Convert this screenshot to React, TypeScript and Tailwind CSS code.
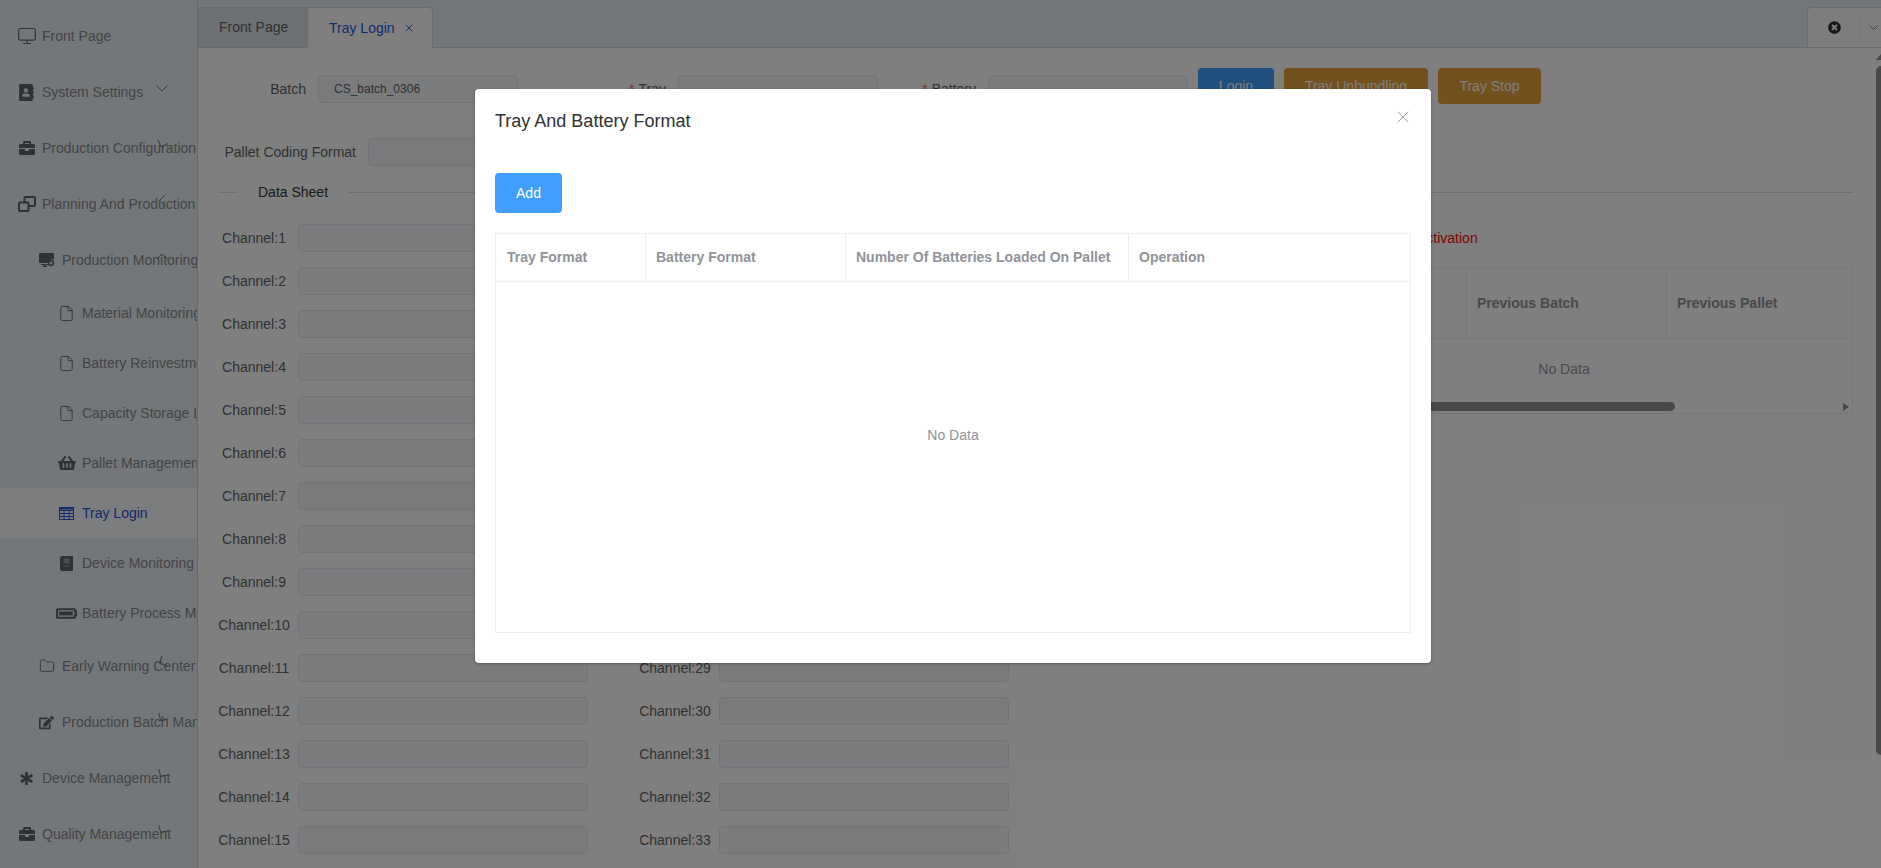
import type { ReactNode } from "react";
import { File, Folder, Monitor, X } from "lucide-react";
import {
  FaAddressBook,
  FaAsterisk,
  FaBatteryFull,
  FaBriefcase,
  FaEdit,
  FaShoppingBasket,
  FaTimesCircle,
} from "react-icons/fa";

function RestoreIcon() {
  return (
    <svg width="18" height="16" viewBox="0 0 18 16" fill="none" stroke="currentColor" strokeWidth="2">
      <rect x="6.500" y="1" width="10.500" height="9" rx="1" />
      <rect x="1" y="6.500" width="9.500" height="8.500" rx="1" fill="#e8eef2" />
    </svg>
  );
}

function ScreenGearIcon() {
  return (
    <svg width="15" height="14" viewBox="0 0 15 14" fill="currentColor">
      <path d="M1 0h13a1 1 0 0 1 1 1v5.500a4 4 0 0 0-5.500 3.500H1a1 1 0 0 1-1-1V1a1 1 0 0 1 1-1z" />
      <rect x="2" y="11" width="8" height="1" />
      <rect x="4" y="12.500" width="4" height="1.500" />
      <circle cx="12" cy="10" r="2.400" fill="none" stroke="currentColor" strokeWidth="1.600" />
    </svg>
  );
}

function BookIcon() {
  return (
    <svg width="13" height="15" viewBox="0 0 13 15" fill="currentColor">
      <path d="M2 0h11v15H2a2 2 0 0 1-2-2V2a2 2 0 0 1 2-2z" />
      <rect x="3.500" y="2.500" width="6" height="5" fill="#9a9ea3" />
      <rect x="3.500" y="9.500" width="6.500" height="1" fill="#9a9ea3" />
    </svg>
  );
}

function GridIcon() {
  return (
    <svg width="15" height="13" viewBox="0 0 15 13" fill="none" stroke="currentColor" strokeWidth="1">
      <rect x="0.500" y="0.500" width="14" height="12" />
      <path d="M0 3.500h15M0 6.500h15M0 9.500h15M5 3v10M10 3v10" />
      <path d="M0 1.500h15" strokeWidth="2" />
    </svg>
  );
}

type NavRow = {
  label: string;
  level: 0 | 1 | 2;
  icon: ReactNode;
  chevron?: string;
  active?: boolean;
};

const NAV: NavRow[] = [
  { label: "Front Page", level: 0, icon: <Monitor size={20} strokeWidth={1.4} /> },
  { label: "System Settings", level: 0, icon: <FaAddressBook size={17} />, chevron: "rotate-0" },
  { label: "Production Configuration", level: 0, icon: <FaBriefcase size={16} />, chevron: "rotate-[20deg]" },
  { label: "Planning And Production", level: 0, icon: <RestoreIcon />, chevron: "rotate-[90deg]" },
  { label: "Production Monitoring", level: 1, icon: <ScreenGearIcon />, chevron: "rotate-180" },
  { label: "Material Monitoring", level: 2, icon: <File size={17} strokeWidth={1.3} /> },
  { label: "Battery Reinvestment", level: 2, icon: <File size={17} strokeWidth={1.3} /> },
  { label: "Capacity Storage Location", level: 2, icon: <File size={17} strokeWidth={1.3} /> },
  { label: "Pallet Management", level: 2, icon: <FaShoppingBasket size={18} /> },
  { label: "Tray Login", level: 2, icon: <GridIcon />, active: true },
  { label: "Device Monitoring", level: 2, icon: <BookIcon /> },
  { label: "Battery Process Monitoring", level: 2, icon: <FaBatteryFull size={21} /> },
  { label: "Early Warning Center", level: 1, icon: <Folder size={16} strokeWidth={1.3} />, chevron: "rotate-[60deg]" },
  { label: "Production Batch Management", level: 1, icon: <FaEdit size={15} />, chevron: "rotate-[30deg]" },
  { label: "Device Management", level: 0, icon: <FaAsterisk size={13} stroke="currentColor" strokeWidth={30} />, chevron: "rotate-[30deg]" },
  { label: "Quality Management", level: 0, icon: <FaBriefcase size={16} />, chevron: "rotate-[30deg]" },
];

function Sidebar() {
  return (
    <aside className="h-full w-[198px] shrink-0 overflow-hidden border-r border-[#cbd3da] bg-[#e8eef2] pt-2 text-[14px] text-[#85888e]">
      {NAV.map((n) => (
        <div
          key={n.label}
          className={`relative flex items-center whitespace-nowrap ${n.level === 2 ? "h-[50px]" : "h-14"} ${
            n.level === 0 ? "pl-4" : n.level === 1 ? "pl-9" : "pl-14"
          } ${n.active ? "bg-[#f8fbfe] text-[#2456d4]" : ""}`}
        >
          <span className={`mr-[5px] flex w-[21px] shrink-0 justify-center ${n.active ? "" : "text-[#5f6268]"}`}>
            {n.icon}
          </span>
          {n.label}
          {n.chevron && (
            <svg
              width="12"
              height="7"
              viewBox="0 0 12 7"
              fill="none"
              stroke="#6f7378"
              strokeWidth="1"
              className={`absolute left-[156px] top-[21px] ${n.chevron}`}
            >
              <path d="M0.500 0.500 6 6 11.500 0.500" />
            </svg>
          )}
        </div>
      ))}
    </aside>
  );
}

function Tabs() {
  return (
    <div className="relative flex h-12 shrink-0 items-end border-b border-[#cbd3da] bg-[#e8eef2] pt-2">
      <div className="flex h-10 w-[110px] items-center rounded-tl border-l border-r border-t border-[#d4dae0] bg-[#dde2e8] pl-5 text-[14px] text-[#606266]">
        Front Page
      </div>
      <div className="-mb-px flex h-[41px] w-[125px] items-center rounded-tr border-r border-t border-[#d4dae0] bg-white pl-[21px] text-[14px] text-[#2456d4]">
        Tray Login
        <X size={12} strokeWidth={1.800} className="ml-2" />
      </div>
      <div className="absolute bottom-0 right-0 flex h-10 w-[74px] items-center rounded-tl border-l border-t border-[#d4dae0] bg-[#fafafa]">
        <FaTimesCircle size={13} className="ml-5 text-[#303133]" />
        <span className="ml-[19px] h-7 w-px bg-[#e4e7ed]" />
        <svg width="9" height="6" viewBox="0 0 9 6" fill="none" stroke="#7d8186" strokeWidth="1" className="ml-2">
          <path d="M0.500 0.500 4.500 4.500 8.500 0.500" />
        </svg>
      </div>
    </div>
  );
}

function Field({ className = "", value = "" }: { className?: string; value?: string }) {
  return (
    <input
      readOnly
      value={value}
      className={`h-7 shrink-0 rounded border border-[#e4e7ed] bg-[#f5f7fa] px-[15px] text-[12px] text-[#606266] outline-none ${className}`}
    />
  );
}

function FormLabel({ width, required, children }: { width: string; required?: boolean; children: string }) {
  return (
    <label className={`mr-3 shrink-0 text-right text-[14px] leading-7 text-[#606266] ${width}`}>
      {required && <span className="mr-1 text-[#f56c6c]">*</span>}
      {children}
    </label>
  );
}

function Btn({ tone, width, children }: { tone: "blue" | "orange"; width: string; children: string }) {
  return (
    <button
      className={`h-9 rounded text-[14px] text-white ${width} ${tone === "blue" ? "bg-[#409eff]" : "bg-[#e6a23c]"}`}
    >
      {children}
    </button>
  );
}

function ChannelColumn({ from, to }: { from: number; to: number }) {
  const rows: number[] = [];
  for (let n = from; n <= to; n++) rows.push(n);
  return (
    <div className="flex shrink-0 flex-col gap-[15px]">
      {rows.map((n) => (
        <div key={n} className="flex items-center">
          <span className="w-[72px] whitespace-nowrap text-center text-[14px] text-[#606266]">Channel:{n}</span>
          <Field className="ml-2 w-[290px]" />
        </div>
      ))}
    </div>
  );
}

function PageBody() {
  return (
    <div className="relative min-h-0 flex-1 overflow-hidden pl-5 pr-7 pt-5">
      <div className="flex items-start">
        <div className="flex pt-[7px]">
          <FormLabel width="w-[88px]">Batch</FormLabel>
          <Field className="w-[200px]" value="CS_batch_0306" />
          <FormLabel width="w-[148px]" required>
            Tray
          </FormLabel>
          <Field className="w-[200px]" />
          <FormLabel width="w-[98px]" required>
            Battery
          </FormLabel>
          <Field className="w-[200px]" />
        </div>
        <div className="ml-[10px] flex gap-[10px]">
          <Btn tone="blue" width="w-[76px]">Login</Btn>
          <Btn tone="orange" width="w-[144px]">Tray Unbundling</Btn>
          <Btn tone="orange" width="w-[103px]">Tray Stop</Btn>
        </div>
      </div>

      <div className="mt-[34px] flex">
        <FormLabel width="w-[138px]">Pallet Coding Format</FormLabel>
        <Field className="w-[200px]" />
      </div>

      <div className="mt-[18px] flex h-4 items-center">
        <span className="h-px w-5 bg-[#dcdfe6]" />
        <span className="px-5 text-[14px] text-[#303133]">Data Sheet</span>
        <span className="h-px flex-1 bg-[#dcdfe6]" />
      </div>

      <div className="mt-6 flex items-start">
        <ChannelColumn from={1} to={18} />
        <div className="ml-[51px]">
          <ChannelColumn from={19} to={36} />
        </div>
        <div className="ml-[266px] w-[578px] shrink-0">
          <p className="pl-[142px] text-[14px] leading-7 text-[#ff0000]">Activation</p>
          <div className="relative mt-[15px] border border-[#ebeef5]">
            <div className="flex h-[71px] border-b border-[#ebeef5] text-[14px] font-bold text-[#909399]">
              <div className="w-[191px] border-r border-[#ebeef5]" />
              <div className="flex w-[200px] items-center border-r border-[#ebeef5] pl-[10px]">Previous Batch</div>
              <div className="flex flex-1 items-center pl-[10px]">Previous Pallet</div>
            </div>
            <div className="flex h-[60px] items-center justify-center text-[14px] text-[#909399]">No Data</div>
            <div className="h-[14px]">
              <div className="absolute bottom-[2px] left-0 h-[9px] w-[399px] rounded-r-full bg-[#909090]" />
              <span className="absolute bottom-[2px] right-[3px] h-0 w-0 border-y-[4px] border-l-[6px] border-y-transparent border-l-[#909090]" />
            </div>
          </div>
        </div>
      </div>

      {/* page scrollbar */}
      <span className="absolute right-0 top-[6px] h-0 w-0 border-b-[6px] border-l-[5px] border-b-[#909090] border-l-transparent" />
      <div className="absolute right-0 top-[18px] h-[689px] w-[5px] rounded-l-full bg-[#909090]" />
    </div>
  );
}

function FormatDialog() {
  return (
    <div className="absolute left-[475px] top-[89px] h-[574px] w-[956px] rounded-sm bg-white shadow-[0_1px_3px_rgba(0,0,0,0.3)]">
      <div className="relative h-[84px] pl-5 pt-5 text-[18px] leading-6 text-[#303133]">
        Tray And Battery Format
        <X size={20} strokeWidth={1.100} className="absolute right-[18px] top-[18px] text-[#909399]" />
      </div>
      <div className="px-5">
        <button className="h-10 w-[67px] rounded bg-[#409eff] text-[14px] font-medium text-white">Add</button>
        <div className="mt-5 flex h-[400px] w-[916px] flex-col border border-[#ebeef5]">
          <div className="flex h-12 shrink-0 items-center border-b border-[#ebeef5] text-[14px] font-bold text-[#909399]">
            <div className="flex h-full w-[150px] items-center border-r border-[#ebeef5] pl-[11px]">Tray Format</div>
            <div className="flex h-full w-[200px] items-center border-r border-[#ebeef5] pl-[10px]">Battery Format</div>
            <div className="flex h-full w-[283px] items-center border-r border-[#ebeef5] pl-[10px]">
              Number Of Batteries Loaded On Pallet
            </div>
            <div className="flex h-full flex-1 items-center pl-[10px]">Operation</div>
          </div>
          <div className="flex flex-1 items-center justify-center pb-[44px] text-[14px] text-[#909399]">No Data</div>
        </div>
      </div>
    </div>
  );
}

export default function App() {
  return (
    <div className="relative flex h-[868px] w-[1881px] overflow-hidden bg-white font-['Liberation_Sans',Arial,sans-serif]">
      <Sidebar />
      <main className="flex min-w-0 flex-1 flex-col">
        <Tabs />
        <PageBody />
      </main>
      <div className="absolute inset-0 bg-black/50" />
      <FormatDialog />
    </div>
  );
}
